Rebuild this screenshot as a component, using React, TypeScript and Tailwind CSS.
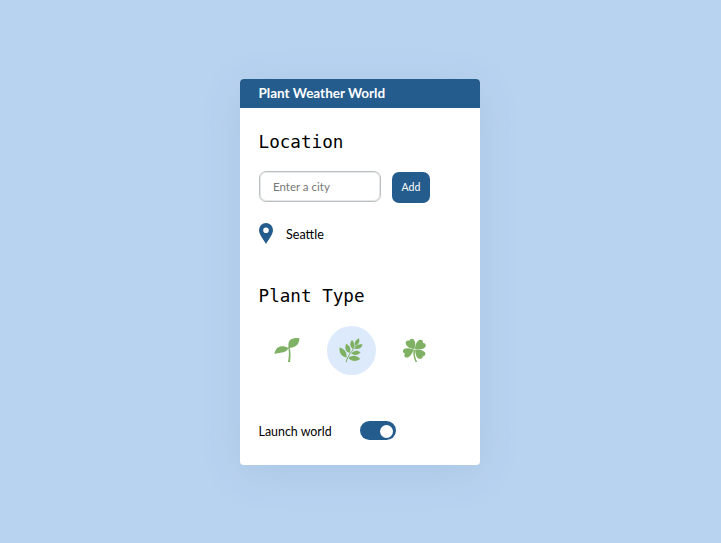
import React, { useState } from "react";

function Sprout() {
  return (
    <svg className="h-[26px] w-[26px]" viewBox="0 0 26 26" fill="#7eb163">
      <path d="M25.400 1.200C19.500.7 15.600 2.200 14.700 5.500c-.5 1.800-.3 3.600-.1 5.300C21 10.900 25.400 8 25.400 1.200Z" />
      <path d="M.5 17C1.600 9 8.500 7.600 14.400 11.100 12.900 16 7.500 15.300.5 17Z" />
      <path d="M13.900 10.100 15.400 9.900C16.900 13.700 16.700 19.500 16.100 24.900L14 25C15.100 20 15.300 13.500 13.900 10.100Z" />
    </svg>
  );
}

function Branch() {
  return (
    <svg className="h-[26px] w-[26px]" viewBox="0 0 26 26" fill="#7eb163">
      <path d="M8.200 25.200C9 19.500 14.500 13.500 18.500 8.300" fill="none" stroke="#7eb163" strokeWidth="1" />
      <path d="M21 1.200C17.200 3 16.200 5.300 17.400 8.700 20.900 7.300 22 4.900 21 1.200Z" />
      <path d="M13.900 3.100C11.400 6.500 11.700 9.500 14.900 12 17.500 9 17 5.900 13.900 3.100Z" />
      <path d="M8.200 6.800C6.300 11.200 7.500 14 11.400 16.300 13.400 12.200 12.300 9.200 8.200 6.800Z" />
      <path d="M1.600 10.600C1 16.100 3.400 19.500 8.500 20.700 9.100 15.300 6.700 12 1.600 10.600Z" />
      <path d="M24.700 7.400C20.400 6.900 18 8.300 16.800 11.700 20.500 12.600 23.300 11.300 24.700 7.400Z" />
      <path d="M22.700 15.300C19.300 12.700 16.100 13.200 13.200 16.300 16.500 18.900 19.600 18.600 22.700 15.300Z" />
      <path d="M22.300 22.100C18.500 18.100 14.300 17.800 10.200 21 13.800 24.500 17.900 25 22.300 22.100Z" />
    </svg>
  );
}

function Clover() {
  return (
    <svg className="h-[26px] w-[26px]" viewBox="-.4 -.4 26 26" fill="#7eb163">
      <path d="M11.900 11.800C7.300 11.300 3.100 8.400 3.300 5.400 3.500 3.300 5.700 2.600 7.100 3.300 7.500 1.100 10.100.6 11.500 2.300 13.500 4.700 13 8 11.900 11.800Z" />
      <path d="M12.600 11.800C12.700 7 14.900 2.700 17.800 2.300 20 2 21 3.900 20.500 5.600 22.800 5.400 24 7.300 23.200 9.200 22 12 17.500 12.500 12.600 11.800Z" />
      <path d="M11.400 12.300C9.600 16.900 6.400 20.900 3.600 20.100 1.700 19.600 1.500 17.600 2.600 16.300.2 15.700-.1 12.900 1.700 11.700 3.900 10.200 7.900 10.900 11.400 12.300Z" />
      <path d="M12.800 12.500C17.400 11.700 22.200 13 22.900 15.700 23.400 17.700 22 19 20.300 18.800 20.500 20.900 18.500 22 16.800 21.400 14 20.400 12.900 16.500 12.800 12.500Z" />
      <path d="M12 12.200C11.200 16.700 12.100 21 14 24.600" fill="none" stroke="#7eb163" strokeWidth="1.500" />
    </svg>
  );
}

const plants = [
  { name: "Sprout", Icon: Sprout },
  { name: "Branch", Icon: Branch },
  { name: "Clover", Icon: Clover },
];

export default function App() {
  const [selected, setSelected] = useState("Branch");
  const [launched, setLaunched] = useState(true);

  return (
    <main className="flex h-screen w-full justify-center bg-[#b8d3f0] pr-px pt-[79px] font-['Lato',sans-serif] text-black">
      <section className="flex h-[386px] w-[240px] flex-col overflow-hidden rounded-[4px] bg-white shadow-[0_8px_44px_rgba(60,85,120,0.10)]">
        <header className="flex h-[28.500px] shrink-0 items-center bg-[#245c8d] pl-[18.500px] text-[13.500px] font-bold text-white">
          Plant Weather World
        </header>
        <div className="flex flex-col pl-[18.600px]">
          <h2 className="mt-[22px] h-6 whitespace-pre font-['DejaVu_Sans_Mono',monospace] text-[17.600px] leading-6">Location</h2>
          <div className="mt-[16.500px] flex h-8">
            <input
              placeholder="Enter a city"
              className="ml-[0.400px] h-[31px] w-[121.600px] translate-y-0 rounded-[7px] border border-[#bcbfc1] bg-white px-[13px] text-[11.500px] shadow-[inset_0_0_0_1px_#e6e7e8] outline-none placeholder:text-[#777777] mt-[0.500px]"
            />
            <button className="ml-[11.400px] mt-[1.500px] h-[31px] w-[38px] rounded-[7px] bg-[#245c8d] pt-px text-[10.500px] text-white">Add</button>
          </div>
          <div className="mt-5 flex h-[22px] items-center">
            <svg className="h-[21px] w-[14px]" viewBox="0 0 14 21" fill="#245c8d">
              <path fillRule="evenodd" d="M7 0A7 7 0 0 0 0 7C0 11.500 4.500 16.500 7 21 9.500 16.500 14 11.500 14 7A7 7 0 0 0 7 0ZM7 4.500A2.800 2.800 0 1 1 7 10.100 2.800 2.800 0 0 1 7 4.500Z" />
            </svg>
            <span className="ml-[13.400px] pt-[4px] text-[12.600px]">Seattle</span>
          </div>
          <h2 className="mt-[39.500px] h-6 whitespace-pre font-['DejaVu_Sans_Mono',monospace] text-[17.600px] leading-6">Plant Type</h2>
          <div className="ml-[4.400px] mt-[18px] flex gap-[15px]">
            {plants.map(({ name, Icon }) => (
              <button
                key={name}
                aria-label={name}
                onClick={() => setSelected(name)}
                className={`flex h-[49px] w-[49px] items-center justify-center rounded-full ${selected === name ? "bg-[#dceafb]" : ""}`}
              >
                <Icon />
              </button>
            ))}
          </div>
          <div className="mt-[46px] flex h-5 items-center">
            <span className="w-[101.500px] pt-[3px] text-[12.400px]">Launch world</span>
            <button
              role="switch"
              aria-label="Launch world"
              aria-checked={launched}
              onClick={() => setLaunched(!launched)}
              className={`flex h-[19px] w-[36px] items-center rounded-full bg-[#245c8d] px-[3.500px] pt-px ${launched ? "justify-end" : "justify-start"}`}
            >
              <span className="h-[13px] w-[13px] rounded-full bg-white" />
            </button>
          </div>
        </div>
      </section>
    </main>
  );
}
